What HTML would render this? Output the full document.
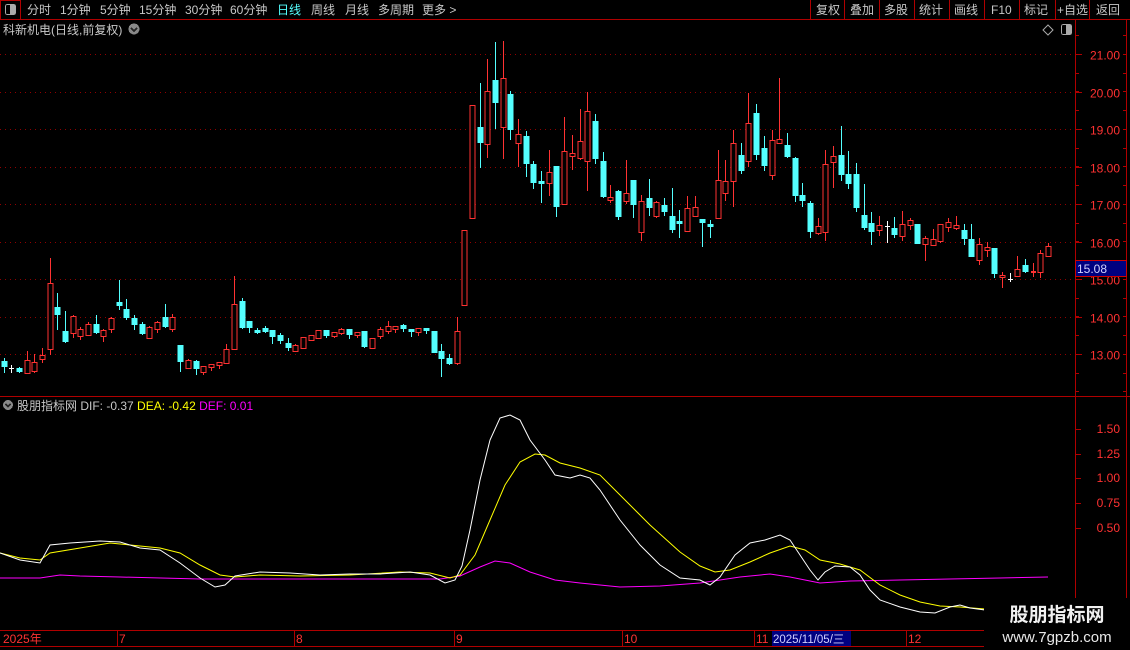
<!DOCTYPE html>
<html><head><meta charset="utf-8">
<style>
html,body{margin:0;padding:0;background:#000;width:1130px;height:650px;overflow:hidden;font-family:"Liberation Sans","Noto Sans CJK SC",sans-serif;}
svg text{font-family:"Liberation Sans","Noto Sans CJK SC",sans-serif;}
</style></head><body>
<svg id="s" width="1130" height="650" viewBox="0 0 1130 650" xmlns="http://www.w3.org/2000/svg" shape-rendering="crispEdges">
<rect width="1130" height="650" fill="#000"/>
<!-- top bar -->
<line x1="0" y1="19.5" x2="1130" y2="19.5" stroke="#b00000"/>
<rect x="0.5" y="0.5" width="20" height="19" fill="none" stroke="#b00000"/>
<rect x="5.5" y="4.5" width="10" height="10" rx="2" fill="none" stroke="#aaa"/>
<rect x="10" y="5" width="5" height="9" fill="#aaa"/>
<g font-size="12" fill="#c8c8c8">
<text x="27" y="14">分时</text><text x="60" y="14">1分钟</text><text x="100" y="14">5分钟</text>
<text x="139" y="14">15分钟</text><text x="185" y="14">30分钟</text><text x="230" y="14">60分钟</text>
<text x="277" y="14" fill="#55ffff">日线</text><text x="311" y="14">周线</text><text x="345" y="14">月线</text>
<text x="378" y="14">多周期</text><text x="422" y="14">更多 &gt;</text>
<text x="816" y="14">复权</text><text x="850" y="14">叠加</text><text x="884" y="14">多股</text>
<text x="919" y="14">统计</text><text x="954" y="14">画线</text><text x="991" y="14">F10</text>
<text x="1024" y="14">标记</text><text x="1057" y="14">+自选</text><text x="1096" y="14">返回</text>
<text x="3" y="34">科新机电(日线,前复权)</text>
</g>
<g stroke="#b00000">
<line x1="810.5" y1="0" x2="810.5" y2="19"/><line x1="844.5" y1="0" x2="844.5" y2="19"/><line x1="879.5" y1="0" x2="879.5" y2="19"/>
<line x1="914.5" y1="0" x2="914.5" y2="19"/><line x1="949.5" y1="0" x2="949.5" y2="19"/><line x1="984.5" y1="0" x2="984.5" y2="19"/>
<line x1="1019.5" y1="0" x2="1019.5" y2="19"/><line x1="1055.5" y1="0" x2="1055.5" y2="19"/><line x1="1089.5" y1="0" x2="1089.5" y2="19"/>
</g>
<circle cx="134" cy="29" r="5.5" fill="#888"/><path d="M131 28 L134 31 L137 28" stroke="#222" fill="none" stroke-width="1.5"/>
<path d="M1048 25 L1053 30 L1048 35 L1043 30 Z" fill="none" stroke="#aaa" shape-rendering="auto"/>
<rect x="1061.5" y="24.5" width="10" height="10" rx="2" fill="none" stroke="#aaa"/><rect x="1066" y="25" width="5" height="9" fill="#aaa"/>
<!-- axes -->
<line x1="1075.5" y1="20" x2="1075.5" y2="630" stroke="#b00000"/>
<line x1="1126.5" y1="20" x2="1126.5" y2="630" stroke="#b00000"/>
<line x1="0" y1="396.5" x2="1130" y2="396.5" stroke="#b00000"/>
<line x1="0" y1="630.5" x2="1130" y2="630.5" stroke="#b00000"/>
<line x1="0" y1="646.5" x2="985" y2="646.5" stroke="#b00000"/>
<g id="grid"></g>
<g id="candles"></g>
<!-- price tag -->
<rect x="1075.5" y="260.5" width="51" height="16" fill="#000080" stroke="#d00000"/>
<text x="1077" y="273" font-size="12" fill="#d0d0ff">15.08</text>
<!-- lower panel -->
<circle cx="8" cy="405" r="5" fill="#888"/><path d="M5.5 404 L8 406.5 L10.5 404" stroke="#222" fill="none" stroke-width="1.5"/>
<text x="17" y="410" font-size="12" fill="#c8c8c8">股朋指标网 <tspan fill="#c8c8c8">DIF: -0.37</tspan> <tspan fill="#ffff00">DEA: -0.42</tspan> <tspan fill="#ff00ff">DEF: 0.01</tspan></text>
<g font-size="12" fill="#ff3232" text-anchor="end">
<text x="1120" y="433">1.50</text><text x="1120" y="458">1.25</text><text x="1120" y="482">1.00</text><text x="1120" y="507">0.75</text><text x="1120" y="532">0.50</text>
</g>
<g stroke="#b00000">
<line x1="1075" y1="429.5" x2="1081" y2="429.5"/><line x1="1075" y1="454.5" x2="1081" y2="454.5"/><line x1="1075" y1="478.5" x2="1081" y2="478.5"/><line x1="1075" y1="503.5" x2="1081" y2="503.5"/><line x1="1075" y1="528.5" x2="1081" y2="528.5"/>
</g>
<g fill="none" stroke-width="1" shape-rendering="auto">
<polyline stroke="#ff00ff" points="0,578 40,578 60,575 80,576 120,577 200,579 300,579 440,579 460,576 480,567 495,561 510,563 530,572 555,580 580,583 620,587 660,586 700,583 740,577 770,574 790,577 820,583 850,581 900,580 1000,578 1048,577"/>
<polyline stroke="#ffff00" points="0,553 20,558 40,560 50,553 80,548 110,543 130,545 160,548 180,553 200,565 220,575 235,577 260,575 300,576 350,575 400,572 430,573 450,578 460,575 475,555 490,520 505,485 520,462 535,454 545,455 560,463 580,468 600,475 620,495 650,525 680,552 700,566 715,572 730,570 750,562 770,553 790,546 805,550 820,560 840,564 860,570 880,585 900,595 920,602 940,606 960,607 985,609"/>
<polyline stroke="#ffffff" points="0,553 20,560 40,563 50,545 70,543 100,541 120,542 140,548 160,550 180,563 200,578 215,587 225,585 235,576 260,572 290,573 320,575 350,574 380,574 410,572 430,575 445,583 455,580 462,566 470,530 480,480 490,440 500,418 510,415 520,420 530,440 545,460 555,475 570,478 580,475 590,478 600,490 620,520 640,545 660,565 680,578 700,580 710,585 720,577 735,555 750,543 765,540 780,535 790,540 800,555 810,570 818,580 825,572 835,566 850,567 860,575 870,590 880,600 900,607 920,612 935,613 950,607 960,605 970,608 985,610"/>
</g>
<!-- date axis -->
<g stroke="#b00000">
<line x1="117.5" y1="630" x2="117.5" y2="646"/><line x1="294.5" y1="630" x2="294.5" y2="646"/><line x1="454.5" y1="630" x2="454.5" y2="646"/>
<line x1="622.5" y1="630" x2="622.5" y2="646"/><line x1="754.5" y1="630" x2="754.5" y2="646"/><line x1="906.5" y1="630" x2="906.5" y2="646"/>
</g>
<g font-size="12" fill="#ff3232">
<text x="3" y="643">2025年</text><text x="119" y="643">7</text><text x="296" y="643">8</text><text x="456" y="643">9</text>
<text x="624" y="643">10</text><text x="756" y="643">11</text><text x="908" y="643">12</text>
</g>
<rect x="772" y="631" width="79" height="15" fill="#000080"/>
<text x="773" y="643" font-size="11.5" fill="#d0d0ff">2025/11/05/三</text>
<!-- watermark -->
<rect x="984" y="598" width="146" height="52" fill="#000"/>
<text x="1057" y="621" font-size="19" font-weight="bold" fill="#f0f0f0" text-anchor="middle">股朋指标网</text>
<text x="1057" y="642" font-size="15" fill="#e8e8e8" text-anchor="middle">www.7gpzb.com</text>
</svg>
<script>
var NS="http://www.w3.org/2000/svg";
function el(p,t,a){var e=document.createElementNS(NS,t);for(var k in a)e.setAttribute(k,a[k]);p.appendChild(e);return e;}
var g=document.getElementById("grid");
var prices=[21,20,19,18,17,16,15,14,13];
prices.forEach(function(p){var y=Math.round(54+(21-p)*37.5)+0.5;
el(g,"line",{x1:0,y1:y,x2:1075,y2:y,stroke:"#900000","stroke-dasharray":"1,4"});
el(g,"line",{x1:1075,y1:y,x2:1082,y2:y,stroke:"#b00000"});
var t=el(g,"text",{x:1120,y:y+5,"font-size":12,fill:"#ff3232","text-anchor":"end"});t.textContent=p.toFixed(2);});
for(var y=35;y<396;y+=18.75){var yy=Math.round(y)+0.5;el(g,"line",{x1:1075,y1:yy,x2:1079,y2:yy,stroke:"#b00000"});el(g,"line",{x1:1123,y1:yy,x2:1126,y2:yy,stroke:"#b00000"});}
var D="c 361 367 358 373|w 368 368 365 373|c 368 372 367 373|r 360 373 351 373|r 362 371 354 373|r 355 359 348 363|r 283 349 258 355|c 307 315 293 330|c 331 342 311 343|r 316 333 315 338|r 329 336 327 340|r 324 335 322 336|c 324 333 315 334|r 330 336 329 342|r 318 329 317 333|c 302 306 280 310|c 309 318 299 320|c 318 325 315 330|c 324 334 322 335|r 327 338 326 339|r 322 329 321 333|c 317 327 304 328|r 317 329 314 332|c 345 362 345 372|r 360 368 359 369|c 361 369 360 375|r 366 372 366 375|r 364 367 364 371|r 362 365 362 369|r 349 363 344 363|r 304 349 276 349|c 301 328 298 329|c 321 328 321 333|c 330 333 328 334|c 328 332 326 333|c 330 337 330 344|c 335 341 333 344|c 343 348 338 351|r 345 351 344 352|r 337 348 337 349|r 335 340 335 340|r 330 338 330 338|c 330 336 330 338|r 332 336 332 338|r 329 333 328 335|c 329 335 329 339|r 332 335 332 338|c 331 347 331 348|r 338 348 338 349|r 329 336 327 339|r 326 331 321 334|r 326 329 326 333|c 325 329 324 332|c 329 332 329 337|r 328 332 328 336|c 328 331 328 334|c 331 353 331 353|c 351 359 344 377|c 358 364 354 365|r 331 363 317 365|r 230 305 230 305|r 105 218 105 218|c 127 143 83 168|r 91 144 59 158|c 80 103 42 129|r 78 127 41 159|c 94 130 91 140|r 134 143 119 167|c 136 164 131 177|c 164 183 161 189|c 181 184 171 203|r 172 183 150 196|c 166 207 166 217|r 151 204 117 204|r 153 156 135 170|r 141 158 109 160|r 111 161 92 191|c 121 159 114 164|c 161 197 152 198|r 197 200 185 203|c 191 217 190 220|r 193 201 160 204|c 180 205 180 218|r 201 232 195 241|c 198 208 179 216|r 202 216 201 218|c 205 212 198 216|c 216 230 188 233|c 221 224 210 238|r 208 231 196 231|r 207 216 196 217|c 219 223 219 247|c 224 227 220 238|r 180 218 150 218|r 181 193 160 201|r 143 181 130 207|c 155 171 143 174|r 123 161 93 167|c 113 155 104 160|c 148 166 136 171|r 140 175 130 180|r 139 143 78 143|c 145 157 133 158|c 158 196 157 202|c 195 201 183 207|c 203 232 201 238|r 226 233 218 235|r 164 232 150 241|r 156 162 146 188|c 155 175 126 181|c 174 184 151 189|c 174 208 163 212|c 215 228 184 230|c 223 232 212 245|r 225 230 216 236|w 226 227 221 243|c 228 235 217 238|r 224 236 211 241|r 220 225 218 230|c 224 244 224 244|r 238 244 236 261|r 239 245 229 246|r 224 241 224 243|r 222 227 218 232|r 225 228 216 230|c 230 239 224 245|c 239 257 224 257|r 244 260 238 265|r 247 250 242 257|c 248 274 248 278|r 275 277 272 288|w 279 279 273 282|r 269 276 256 277|c 265 272 259 273|r 271 272 263 277|r 253 272 250 278|r 246 256 243 257";
var cg=document.getElementById("candles");
D.split("|").forEach(function(s,i){var a=s.split(" "),t=a[0],top=+a[1],bot=+a[2],hi=+a[3],lo=+a[4];
var cx=Math.round(3.5+i*7.68);var col=t=="r"?"#ff3232":(t=="c"?"#54ffff":"#ffffff");
el(cg,"line",{x1:cx+0.5,y1:hi,x2:cx+0.5,y2:lo,stroke:col});
if(t=="w"){el(cg,"line",{x1:cx-2,y1:top+0.5,x2:cx+3,y2:top+0.5,stroke:col});return;}
if(bot-top<2){el(cg,"rect",{x:cx-2,y:top,width:5,height:2,fill:col});return;}
if(t=="r"){el(cg,"rect",{x:cx-2,y:top+0.5,width:5,height:bot-top,fill:"#000",stroke:col});}
else{el(cg,"rect",{x:cx-2.5,y:top,width:6,height:bot-top,fill:col});}
});
</script>
</body></html>
